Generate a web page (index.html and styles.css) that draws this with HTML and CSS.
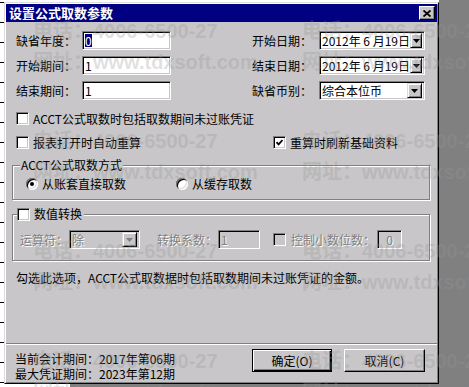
FILE: index.html
```html
<!DOCTYPE html>
<html lang="zh-CN">
<head>
    <meta charset="UTF-8">
    <title>设置公式取数参数</title>
    <link rel="stylesheet" href="styles.css">
</head>
<body>

    <div class="desk">
        <div class="dialog">
            <div class="titlebar">
                <span class="title">设置公式取数参数</span>
                <button class="close-btn">
                    <svg width="8" height="7" viewBox="0 0 8 7"><path d="M0.5 0.5L7.5 6.5M7.5 0.5L0.5 6.5" stroke="#000" stroke-width="1.8"/></svg>
                </button>
            </div>

            <div class="content">
                <div class="fields">
                    <span class="lbl">缺省年度：</span>
                    <div class="edit"><span class="sel">0</span></div>
                    <span class="lbl">开始日期：</span>
                    <div class="combo">
                        <span class="val">2012年 6 月19日</span>
                        <span class="drop"><svg width="7" height="4" viewBox="0 0 7 4"><path d="M0 0h7L3.5 4z" fill="#000"/></svg></span>
                    </div>

                    <span class="lbl">开始期间：</span>
                    <div class="edit">1</div>
                    <span class="lbl">结束日期：</span>
                    <div class="combo">
                        <span class="val">2012年 6 月19日</span>
                        <span class="drop"><svg width="7" height="4" viewBox="0 0 7 4"><path d="M0 0h7L3.5 4z" fill="#000"/></svg></span>
                    </div>

                    <span class="lbl">结束期间：</span>
                    <div class="edit">1</div>
                    <span class="lbl">缺省币别：</span>
                    <div class="combo">
                        <span class="val">综合本位币</span>
                        <span class="drop"><svg width="7" height="4" viewBox="0 0 7 4"><path d="M0 0h7L3.5 4z" fill="#000"/></svg></span>
                    </div>
                </div>

                <div class="check-row first">
                    <label class="check"><span class="box"></span>ACCT公式取数时包括取数期间未过账凭证</label>
                </div>
                <div class="check-row">
                    <label class="check wide"><span class="box"></span>报表打开时自动重算</label>
                    <label class="check"><span class="box checked"><svg width="7" height="7" viewBox="0 0 7 7"><path d="M0.5 3.2L2.6 5.4L6.5 1" fill="none" stroke="#000" stroke-width="1.8"/></svg></span>重算时刷新基础资料</label>
                </div>

                <fieldset class="group mode">
                    <legend>ACCT公式取数方式</legend>
                    <div class="radio-row">
                        <label class="radio first"><span class="rb on"></span>从账套直接取数</label>
                        <label class="radio"><span class="rb"></span>从缓存取数</label>
                    </div>
                </fieldset>

                <fieldset class="group num">
                    <legend><label class="check"><span class="box"></span>数值转换</label></legend>
                    <div class="num-row">
                        <span class="lbl dis op-lbl">运算符：</span>
                        <div class="combo dis op">
                            <span class="val">除</span>
                            <span class="drop"><svg width="7" height="4" viewBox="0 0 7 4"><path d="M0 0h7L3.5 4z" fill="#808080"/></svg></span>
                        </div>
                        <span class="lbl dis factor-lbl">转换系数：</span>
                        <div class="edit dis factor">1</div>
                        <span class="box dis"></span>
                        <span class="lbl dis digits-lbl">控制小数位数：</span>
                        <div class="edit dis digits">0</div>
                    </div>
                </fieldset>

                <p class="hint">勾选此选项，ACCT公式取数据时包括取数期间未过账凭证的金额。</p>
            </div>

            <div class="footer">
                <div class="status">
                    <div>当前会计期间：2017年第06期</div>
                    <div>最大凭证期间：2023年第12期</div>
                </div>
                <div class="buttons">
                    <button class="btn default">确定(O)</button>
                    <button class="btn">取消(C)</button>
                </div>
            </div>
        </div>
    </div>
    <div class="strip"></div>

    <!-- screenshot watermark -->
    <div class="watermark">
        <div class="wm"><div>电话：4006-6500-27</div><div>网址：www.tdxsoft.com</div></div>
        <div class="wm"><div>电话：4006-6500-27</div><div>网址：www.tdxsoft.com</div></div>
        <div class="wm"><div>电话：4006-6500-27</div><div>网址：www.tdxsoft.com</div></div>
        <div class="wm"><div>电话：4006-6500-27</div><div>网址：www.tdxsoft.com</div></div>
        <div class="wm"><div>电话：4006-6500-27</div><div>网址：www.tdxsoft.com</div></div>
        <div class="wm"><div>电话：4006-6500-27</div><div>网址：www.tdxsoft.com</div></div>
        <div class="wm"><div>电话：4006-6500-27</div><div>网址：www.tdxsoft.com</div></div>
        <div class="wm"><div>电话：4006-6500-27</div><div>网址：www.tdxsoft.com</div></div>
    </div>

</body>
</html>
```

FILE: styles.css
```css
/* Basic reset */
* {
    margin: 0;
    padding: 0;
    box-sizing: border-box;
}

body {
    position: relative;
    width: 469px;
    height: 387px;
    overflow: hidden;
    background: #808080;
    font-family: "Noto Sans CJK SC", sans-serif;
    font-size: 12px;
    line-height: 14px;
    color: #000;
}

/* window behind the dialog (report grid) */
.desk {
    width: 439px;
    height: 384px;
    padding: 2px 0 0 4px;
    background: repeating-linear-gradient(to bottom, #000 0 1px, #fff 1px 20px);
    background-position: 0 2px;
}

.strip {
    width: 70px;
    height: 3px;
    background: #fff;
}

.dialog {
    width: 435px;
    height: 382px;
    padding: 1px;
    background: #c8c6c8;
    border: 1px solid;
    border-color: #dcdcdc #000 #000 #dcdcdc;
    box-shadow: inset 1px 1px #fff, inset -1px -1px #808080;
    display: flex;
    flex-direction: column;
}

.titlebar {
    height: 18px;
    padding: 0 2px 0 3px;
    background: #000080;
    display: flex;
    align-items: center;
    justify-content: space-between;
}

.title {
    color: #fff;
    font-size: 13px;
    font-weight: bold;
}

.close-btn {
    width: 16px;
    height: 14px;
    background: #c8c6c8;
    border: 1px solid;
    border-color: #fff #000 #000 #fff;
    box-shadow: inset -1px -1px #808080;
    display: flex;
    align-items: center;
    justify-content: center;
}

.content {
    padding: 9px 0 0 10px;
}

.fields {
    display: grid;
    grid-template-columns: 66px 170px 67px 106px;
    grid-auto-rows: 19px;
    row-gap: 6px;
    align-items: center;
}

.lbl {
    white-space: nowrap;
}

/* sunken edit box */
.edit {
    width: 89px;
    height: 19px;
    padding: 0 2px;
    background: #fff;
    border: 1px solid;
    border-color: #808080 #fff #fff #808080;
    box-shadow: inset 1px 1px #000, inset -1px -1px #c8c6c8;
    display: flex;
    align-items: center;
}

.sel {
    background: #000080;
    color: #fff;
    line-height: 13px;
}

.combo {
    width: 106px;
    height: 19px;
    padding: 2px;
    background: #fff;
    border: 1px solid;
    border-color: #808080 #fff #fff #808080;
    box-shadow: inset 1px 1px #000, inset -1px -1px #c8c6c8;
    display: flex;
    align-items: center;
}

.combo .val {
    flex: 1;
    white-space: nowrap;
}

.drop {
    width: 15px;
    height: 15px;
    background: #c8c6c8;
    border: 1px solid;
    border-color: #dcdcdc #000 #000 #dcdcdc;
    box-shadow: inset 1px 1px #fff, inset -1px -1px #808080;
    display: flex;
    align-items: center;
    justify-content: center;
}

/* checkboxes */
.check-row {
    display: flex;
    align-items: center;
    height: 15px;
    margin-top: 9px;
}

.check-row.first {
    margin-top: 11px;
}

.check {
    display: flex;
    align-items: center;
    gap: 4px;
    white-space: nowrap;
}

.check.wide {
    width: 257px;
}

.box {
    width: 13px;
    height: 13px;
    flex: none;
    background: #fff;
    border: 1px solid;
    border-color: #808080 #fff #fff #808080;
    box-shadow: inset 1px 1px #000, inset -1px -1px #c8c6c8;
    display: flex;
    align-items: center;
    justify-content: center;
}

.box.dis {
    background: #c8c6c8;
    margin-left: 13px;
}

/* group boxes */
.group {
    width: 418px;
    margin: 8px 0 0 -4px;
    border: 1px solid #808080;
    box-shadow: inset 1px 1px #fff, 1px 1px #fff;
    padding: 5px 0 8px 7px;
}

.group legend {
    padding: 0 1px;
    background: #c8c6c8;
    line-height: 14px;
}

.group.num {
    margin-top: 7px;
    padding: 9px 0 11px 4px;
}

.group.num legend {
    padding: 0 2px 0 0;
}

.radio-row {
    display: flex;
    align-items: center;
    height: 14px;
}

.radio {
    display: flex;
    align-items: center;
    gap: 4px;
}

.radio.first {
    width: 150px;
    margin-left: 6px;
}

.rb {
    position: relative;
    width: 12px;
    height: 12px;
    border-radius: 50%;
    background: #fff;
    box-shadow: inset 1px 1px #808080, inset -1px -1px #fff, inset 2px 2px #000, inset -2px -2px #dcdcdc;
}

.rb.on::after {
    content: "";
    position: absolute;
    left: 4px;
    top: 4px;
    width: 4px;
    height: 4px;
    border-radius: 50%;
    background: #000;
}

.num-row {
    display: flex;
    align-items: center;
    height: 19px;
}

.dis {
    color: #808080;
    text-shadow: 1px 1px #fff;
}

.combo.dis,
.edit.dis {
    background: #c8c6c8;
}

.op-lbl {
    width: 49px;
    margin-left: 3px;
}

.combo.op {
    width: 71px;
}

.factor-lbl {
    width: 61px;
    margin-left: 17px;
}

.edit.factor {
    width: 42px;
}

.digits-lbl {
    width: 86px;
    margin-left: 5px;
}

.edit.digits {
    width: 25px;
    justify-content: center;
}

.hint {
    margin-top: 10px;
}

/* bottom part */
.footer {
    margin-top: auto;
    height: 39px;
    padding: 5px 12px 0 9px;
    border-top: 1px solid #808080;
    box-shadow: inset 0 1px #fff;
    display: flex;
    justify-content: space-between;
    align-items: flex-start;
}

.status {
    padding-top: 2px;
    line-height: 15px;
}

.buttons {
    display: flex;
    gap: 12px;
}

.btn {
    width: 80px;
    height: 23px;
    background: #c8c6c8;
    font: inherit;
    border: 1px solid;
    border-color: #fff #000 #000 #fff;
    box-shadow: inset -1px -1px #808080;
}

.btn + .btn {
    width: 81px;
}

.btn.default {
    border-color: #000;
    box-shadow: inset 1px 1px #fff, inset -1px -1px #000, inset -2px -2px #808080;
}

/* faint watermark lying over the whole shot */
.watermark {
    position: absolute;
    top: 0;
    left: 0;
    width: 100%;
    height: 100%;
    overflow: hidden;
    pointer-events: none;
    display: grid;
    grid-template-columns: 269px 167px;
    grid-template-rows: repeat(4, 110px);
    padding: 16px 0 0 33px;
    color: rgba(150, 150, 150, 0.3);
    font: bold 20px "Liberation Sans", "Noto Sans CJK SC", sans-serif;
    line-height: 31px;
    white-space: nowrap;
}

.wm {
    overflow: hidden;
}
```
